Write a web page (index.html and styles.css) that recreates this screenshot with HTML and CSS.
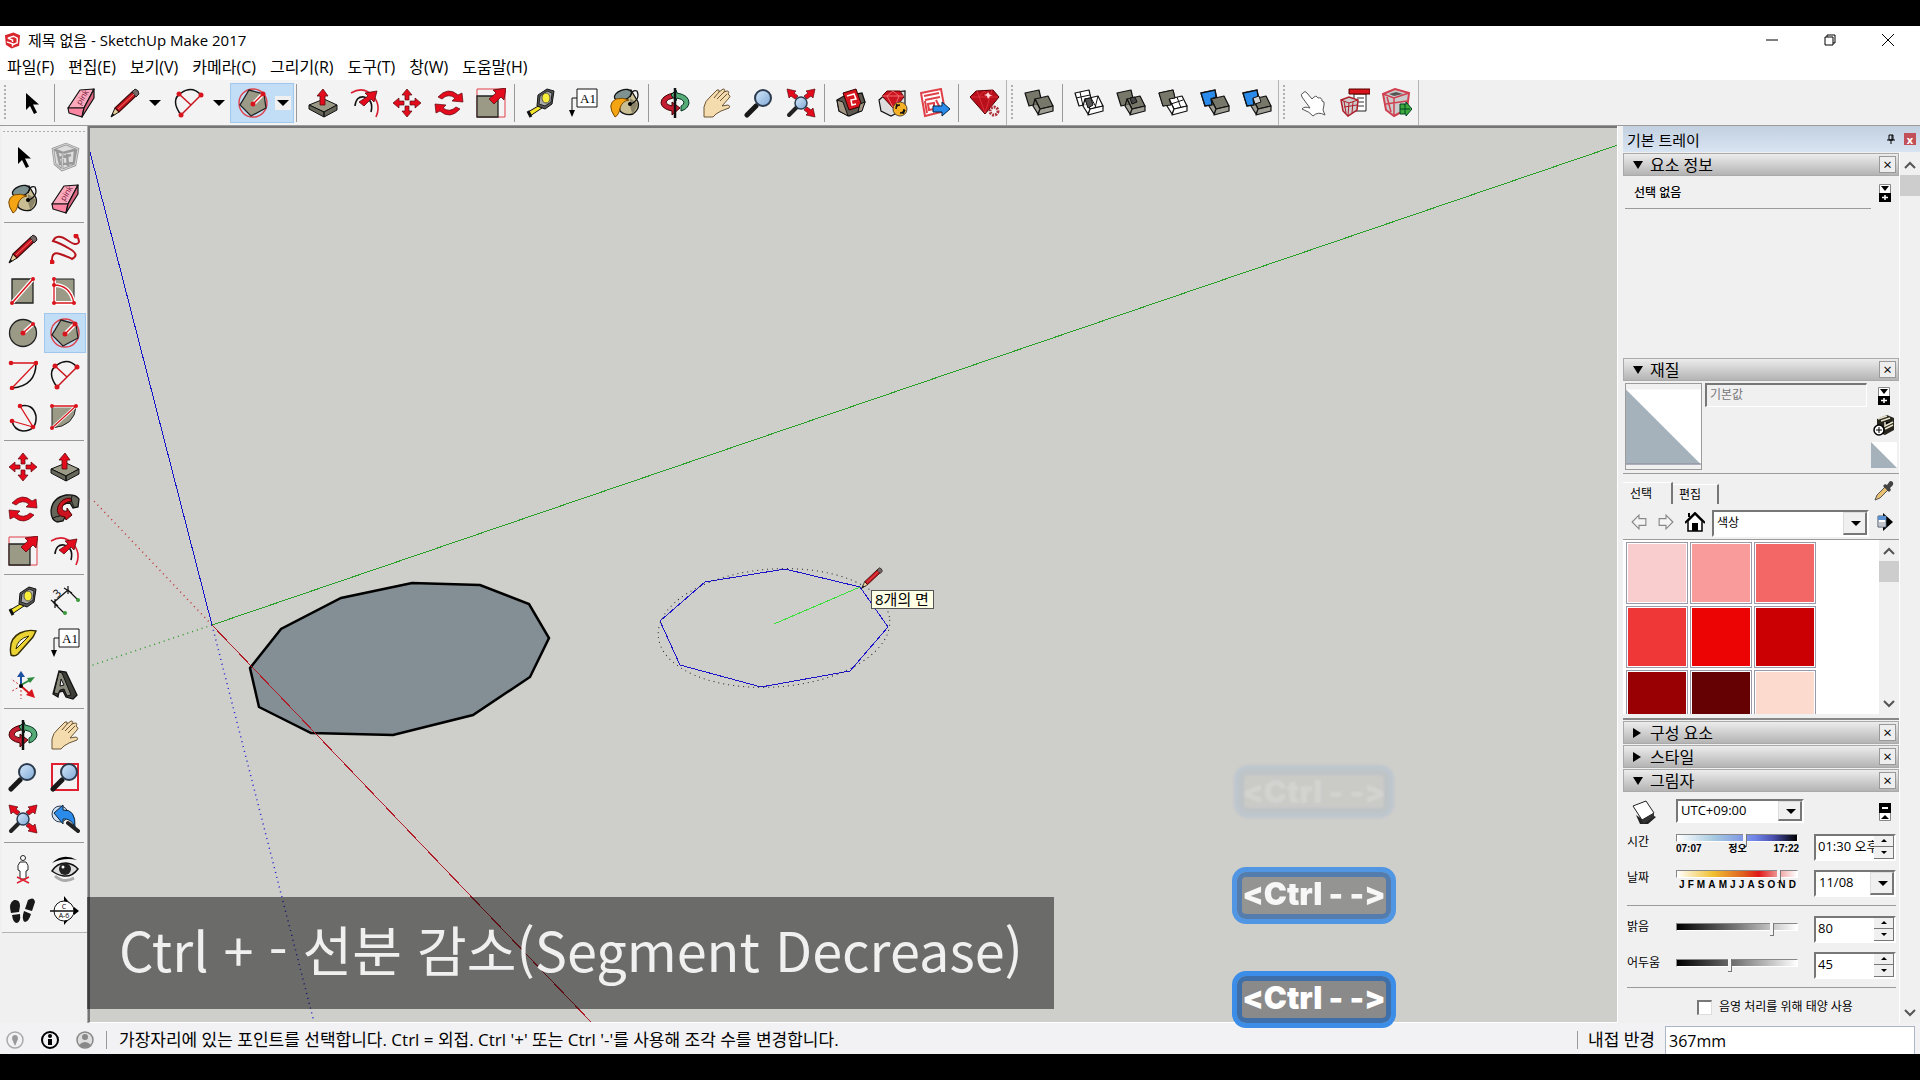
FILE: index.html
```html
<!DOCTYPE html>
<html lang="ko">
<head>
  <meta charset="UTF-8" />
  <meta name="viewport" content="width=device-width, initial-scale=1.0"/>
  <title>제목 없음 - SketchUp Make 2017</title>
  <link rel="stylesheet" href="styles.css">
</head>
<body>
  <!-- icon set, shared by both toolbars -->
  <svg class="icon-defs" aria-hidden="true">
    <linearGradient id="lens" x1="0" y1="0" x2="1" y2="1"><stop offset="0" stop-color="#d4e8fa"/><stop offset="1" stop-color="#7fa8d6"/></linearGradient>
    <symbol id="i-select" viewBox="0 0 30 30"><path d="M10 5v17l4-4 4 8 3-1.500-4-8h6z" fill="#000"/></symbol>
    <symbol id="i-component" viewBox="0 0 30 30"><path d="M3 7l13-5 12 5-3 16-13 5-7-6z" fill="#ddd"/><g fill="none" stroke="#999" stroke-width="2.500"><path d="M3 7l13-5 12 5-3 16-13 5-7-6zM3 7l10 4 15-4M13 11l-1 17M7 9l3 13 14-1 1-12M9 16l12-3M17 12l1 12"/></g><path d="M3 7l13-5 12 5-3 16-13 5-7-6zM13 11l-1 17" fill="none" stroke="#eee" stroke-width=".7"/></symbol>
    <symbol id="i-eraser" viewBox="0 0 30 30"><g stroke="#111" stroke-width="1.200" stroke-linejoin="round"><path d="M2 20L14 2l14-1-10 19z" fill="#fba9bd"/><path d="M2 20l16 0-2 9-13-4z" fill="#fb86a2"/><path d="M18 20L28 1v9L16 29z" fill="#d9647f"/></g></symbol>
    <symbol id="i-pencil" viewBox="0 0 30 30"><path d="M1 29l4-9 4 4z" fill="#e8cf9a" stroke="#111"/><path d="M1 29l1.500-4 2 2z" fill="#111"/><path d="M5 20L23 3l4 4L9 24z" fill="#c8141c" stroke="#3a0a0a" stroke-width="1.200"/><path d="M22 4l3-3q4 1 4 5l-3 3z" fill="#766" stroke="#222"/><path d="M8 21L24 6" stroke="#f27070"/></symbol>
    <symbol id="i-arc" viewBox="0 0 30 30"><path d="M7 27Q-4 12 7 5Q18-3 27 7" fill="none" stroke="#111" stroke-width="1.500"/><path d="M7 27L27 7M5 6l12 11" stroke="#c8141c" stroke-width="1.500"/><g fill="#d8141c"><circle cx="7" cy="27" r="2.500"/><circle cx="27" cy="7" r="2.500"/><circle cx="5" cy="6" r="2.500"/></g></symbol>
    <symbol id="i-polygon" viewBox="0 0 30 30"><circle cx="15" cy="15" r="14" fill="none" stroke="#e04048" stroke-width="1.400"/><path d="M11 2l15 4 2 14-15 8L2 17z" fill="#9a9a86" stroke="#222" stroke-width="1.300"/><path d="M15 16L25 6" stroke="#fff" stroke-width="4"/><path d="M15 16L25 6" stroke="#d8141c" stroke-width="1.500"/><circle cx="15" cy="16" r="2.500" fill="#d8141c"/><circle cx="25" cy="6" r="2.500" fill="#d8141c"/></symbol>
    <symbol id="i-pushpull" viewBox="0 0 30 30"><path d="M1 17l15-6 13 6-13 7z" fill="#9a9a86" stroke="#111"/><path d="M1 17l15 7v5L1 21zM16 24l13-7v5l-13 7z" fill="#66665a" stroke="#111"/><path d="M15 1l5 7h-3v9h-5V8H9z" fill="#e30b1c" stroke="#5a0a10" stroke-width=".8"/></symbol>
    <symbol id="i-offset" viewBox="0 0 30 30"><path d="M1 5Q14-3 24 9q7 9 2 20" fill="none" stroke="#d82030" stroke-width="1.600"/><path d="M5 18Q6 8 14 9q10 3 7 15" fill="none" stroke="#111" stroke-width="1.600"/><path d="M27 3l-3 11-3-3-7 7-5-4 9-6-3-3z" fill="#e30b1c" stroke="#5a0a10" stroke-width=".8"/></symbol>
    <symbol id="i-move" viewBox="0 0 30 30"><g fill="#e30b1c" stroke="#5a0a10" stroke-width=".7"><path id="marr" d="M15 1l5 6h-3v5h-4V7h-3z"/><use href="#marr" transform="rotate(90 15 15)"/><use href="#marr" transform="rotate(180 15 15)"/><use href="#marr" transform="rotate(270 15 15)"/></g></symbol>
    <symbol id="i-rotate" viewBox="0 0 30 30"><g fill="#e30b1c" stroke="#5a0a10" stroke-width=".7"><path id="rarr" d="M4 9Q14-2 24 7l4-2 1 9-11-1 3-3Q14 5 8 11z"/><use href="#rarr" transform="rotate(180 15 15)"/></g></symbol>
    <symbol id="i-scale" viewBox="0 0 30 30"><path d="M1 1h28v28H1z" fill="none" stroke="#e04048"/><path d="M1 8h21v21H1z" fill="#9a9a86" stroke="#222" stroke-width="1.300"/><path d="M30 0l-2 12-3-3-7 7-5-5 7-6-3-3z" fill="#e30b1c" stroke="#5a0a10" stroke-width=".8"/></symbol>
    <symbol id="i-tape" viewBox="0 0 30 30"><path d="M2 24l12-7 2 3L4 28z" fill="#f4e52a" stroke="#111"/><path d="M2 23l3 6" stroke="#111" stroke-width="3"/><path d="M12 7l9-6 7 2-2 13-7 5-8-3z" fill="#555" stroke="#111"/><path d="M14 8l7-5 5 2-1 9-6 4-6-2z" fill="#aaa" stroke="#222"/><ellipse cx="20" cy="10" rx="4" ry="5" fill="#f8ee3a" stroke="#554"/></symbol>
    <symbol id="i-text" viewBox="0 0 30 30"><path d="M9 1h20v18H9z" fill="#fff" stroke="#111"/><path d="M9 10H4v14" fill="none" stroke="#111"/><path d="M1 22h6l-3 7z"/></symbol>
    <symbol id="i-paint" viewBox="0 0 30 30"><path d="M8 8l13-6 7 12q2 7-5 12-8 2-13-3z" fill="#c9bd93" stroke="#111" stroke-width="1.300"/><path d="M20 10l8 6-5 10q-4-6-3-16z" fill="#8c8468"/><ellipse cx="13" cy="7" rx="9" ry="5" transform="rotate(-20 13 7)" fill="#7e9292" stroke="#111" stroke-width="1.300"/><path d="M5 29Q-4 16 6 11q6-2 13 1-7 1-9 8-1 7-5 9z" fill="#f5a414" stroke="#7a4a00"/><path d="M19 17Q31 12 27 3q-5-2-7 6" fill="none" stroke="#111" stroke-width="1.300"/><circle cx="20" cy="16" r="2"/></symbol>
    <symbol id="i-orbit" viewBox="0 0 30 30"><path d="M13 5Q1 8 1 15q1 6 11 8v4l8-7-8-6v4q-6-1-6-4 1-3 7-4z" fill="#c41c30" stroke="#400"/><path d="M17 5q12 2 12 10-1 6-8 8v-5q3-1 3-4-1-3-7-4l-1 3-5-6 5-5z" fill="#56ab76" stroke="#032"/><path d="M15 0v30" stroke="#111" stroke-width="2.500"/></symbol>
    <symbol id="i-hand" viewBox="0 0 30 30"><path d="M2 29V19q1-6 6-10l7-7q3-1 2 2l4-3q3 0 1 3l3-1q3 0 1 3l1 1q2 1 0 3l-7 8 6-1q3 1 1 3l-8 3q-6 3-8 6z" fill="#f5dcae" stroke="#6b5535"/><path d="M12 10l5-6M15 11l7-7M18 13l7-7" stroke="#6b5535" fill="none"/></symbol>
    <symbol id="i-zoom" viewBox="0 0 30 30"><path d="M3 27l9-9" stroke="#181818" stroke-width="5" stroke-linecap="round"/><circle cx="19" cy="10" r="8" fill="url(#lens)" stroke="#2b3a4d" stroke-width="2"/></symbol>
    <symbol id="i-extents" viewBox="0 0 30 30"><path d="M3 27l8-8" stroke="#222" stroke-width="4" stroke-linecap="round"/><circle cx="15" cy="15" r="6" fill="url(#lens)" stroke="#2b3a4d" stroke-width="1.500"/><g fill="#e30b1c" stroke="#5a0a10" stroke-width=".7"><path id="xarr" d="M29 1l-2 9-2-2-4 3-3-3 4-3-2-2z"/><use href="#xarr" transform="matrix(-1 0 0 1 30 0)"/><use href="#xarr" transform="matrix(1 0 0 -1 0 30)"/></g></symbol>
    <symbol id="i-zoomwin" viewBox="0 0 30 30"><path d="M2 2h26v26H2z" fill="none" stroke="#e02030" stroke-width="2"/><use href="#i-zoom" width="30" height="30"/></symbol>
    <symbol id="i-previous" viewBox="0 0 30 30"><circle cx="10" cy="10" r="8" fill="#cfe0f2" stroke="#2b3a4d"/><path d="M18 19l10 8" stroke="#222" stroke-width="4" stroke-linecap="round"/><path d="M4 9l9-8v5q13-1 12 17-4-9-12-8v5z" fill="#2a8bea" stroke="#123"/></symbol>
    <symbol id="i-warehouse" viewBox="0 0 30 30"><path d="M1 12l7-4 18-3 3 9-4 9-12 5-10-5z" fill="#5c5850" stroke="#111" stroke-width="1.300"/><path d="M7 5l13-4 6 17-13 4z" fill="#d8141c" stroke="#300"/><path d="M11 8l7-2 2 5-5 1 1 5 4-1" fill="none" stroke="#fff" stroke-width="1.500"/><path d="M1 12l6 2 5 14-9-5zM29 14l-5 2-2 8 4-1z" fill="#a39684" stroke="#111"/></symbol>
    <symbol id="i-extwh" viewBox="0 0 30 30"><path d="M1 12l8-7 18-2v18l-14 7-10-5z" fill="#ddd" stroke="#111" stroke-width="1.200"/><path d="M4 8l5-5h13l4 6-10 12z" fill="#cc1420" stroke="#500"/><path d="M4 8h22M9 8l7 13 5-13-6-5z" fill="none" stroke="#f58080" stroke-width=".8"/><circle cx="22" cy="21" r="7" fill="#f6b023" stroke="#543"/><path d="M18 21q0-4 4-4M26 21q0 4-4 4M19 16l-1 4M25 26l2-4" fill="none" stroke="#111" stroke-width="1.500"/></symbol>
    <symbol id="i-layout" viewBox="0 0 30 30"><path d="M1 5l20-4 4 22L5 28z" fill="#fff" stroke="#e04048" stroke-width="2"/><path d="M4 8l15-3M5 12l15-3M8 16l6-1v6l-5 1zM16 12l4 8M5 13l2 12" fill="none" stroke="#e04048" stroke-width="2"/><path d="M13 18h9v-4l8 7-8 7v-4h-9z" fill="#2a8bea" stroke="#024"/></symbol>
    <symbol id="i-gem" viewBox="0 0 30 30"><path d="M0 9l6-6 17-1 6 7-14 17z" fill="#b80f1a" stroke="#500"/><path d="M1 9h27M7 3l8 22 7-23M9 9l5-6 6 6" fill="none" stroke="#d8303c"/><path d="M18 4l2 3 3 0-3 1-2 3-1-3-3-1 3-1z" fill="#fdd"/><circle cx="24" cy="23" r="4" fill="#f4f3f4" stroke="#b0303a" stroke-width="3" stroke-dasharray="2 1"/></symbol>
    <symbol id="boxes" viewBox="0 0 30 30"><g stroke="#111" stroke-linejoin="round" stroke-width="1.200"><path d="M1 5l14-3 3 13-13 3z"/><path d="M11 11l13-3 5 10-13 3z"/><path d="M11 11l5 10-2 5-5-8zM16 21l13-3v5l-15 4z" fill-opacity=".7"/></g></symbol>
    <symbol id="i-outer" viewBox="0 0 30 30"><use href="#boxes" fill="#77776a"/></symbol>
    <symbol id="i-intersect" viewBox="0 0 30 30"><use href="#boxes" fill="#fff"/><path d="M11 11l6-1 2 7-5 3z" fill="#555" stroke="#111"/><path d="M6 4l3 14M2 10l14-3M17 10l5 9M24 8l-3 12" stroke="#111" fill="none"/></symbol>
    <symbol id="i-union" viewBox="0 0 30 30"><use href="#boxes" fill="#77776a"/><path d="M14 10l5-1 2 5-5 2z" fill="#444" stroke="#111"/></symbol>
    <symbol id="i-subtract" viewBox="0 0 30 30"><use href="#boxes" fill="#fff"/><path d="M1 5l14-3 2 8-6 1 2 6-8 1z" fill="#77776a" stroke="#111"/><path d="M13 16l12-4M19 9l4 11" stroke="#111"/></symbol>
    <symbol id="i-trim" viewBox="0 0 30 30"><use href="#boxes" fill="#77776a"/><path d="M1 5l14-3 1 7-5 2 1 6-7 1z" fill="#2a8bea" stroke="#111" stroke-width="1.300"/></symbol>
    <symbol id="i-split" viewBox="0 0 30 30"><use href="#i-trim" width="30" height="30"/><path d="M11 10l6-2 2 6-6 2z" fill="#d4d4d4" stroke="#111"/></symbol>
    <symbol id="i-finger" viewBox="0 0 30 30"><path d="M5 5q2-3 4 0l5 6q4-5 6-1 4-1 4 3 3 0 2 4l-1 5 2 5q-7-4-12 1-3-4-11-7 2-3 8-1L4 9q-2-3 1-4z" fill="#fff" stroke="#555"/></symbol>
    <symbol id="i-comp-opt" viewBox="0 0 30 30"><path d="M14 6h12v17H14z" fill="#fff" stroke="#222"/><path d="M9 1h21v5H9z" fill="#d8141c" stroke="#500"/><path d="M17 10h7M17 14h7M17 18h7" stroke="#333"/><path d="M1 12l8-3 9 3-1 10-9 6-5-5z" fill="#ccc" stroke="#b01c28" stroke-width="1.500"/><path d="M1 12l8 3 9-3M9 15l-1 13M4 13l2 12M13 14l-1 11M4 19l13-2" stroke="#b01c28" fill="none"/></symbol>
    <symbol id="i-comp-attr" viewBox="0 0 30 30"><path d="M1 6l12-5 14 4-2 16-13 7-8-6z" fill="#ccc" stroke="#d04050" stroke-width="2"/><path d="M7 6l7-2 7 2-9 2z" fill="#555"/><path d="M1 6l11 4 15-5M12 10v18M5 9l4 15M4 16l21-3" stroke="#d04050" stroke-width="1.500" fill="none"/><path d="M18 16h6v-2l6 7-6 7v-2h-6zM18 21h10M23 16v10" fill="#3cab3c" stroke="#042"/></symbol>
    <symbol id="i-freehand" viewBox="0 0 30 30"><path d="M2 28Q1 17 10 20t12 5q8-4-2-10T3 7Q7-1 17 6t12 2q0-4-3-6" fill="none" stroke="#b8141c" stroke-width="2"/><circle cx="2" cy="28" r="2.500" fill="#d8141c"/><circle cx="26" cy="2" r="2.500" fill="#d8141c"/></symbol>
    <symbol id="i-rect" viewBox="0 0 30 30"><path d="M4 3h21v24H4z" fill="#9a9a86" stroke="#222" stroke-width="1.300"/><path d="M4 27L25 3" stroke="#fff" stroke-width="4"/><path d="M4 27L25 3" stroke="#d8141c" stroke-width="1.500"/><circle cx="4" cy="27" r="2" fill="#d8141c"/><circle cx="25" cy="3" r="2" fill="#d8141c"/></symbol>
    <symbol id="i-rotrect" viewBox="0 0 30 30"><path d="M4 3h20v24H4z" fill="#9a9a86" stroke="#222"/><path d="M4 3v24h20M4 9q16 0 20 18" fill="none" stroke="#fff" stroke-width="4"/><path d="M4 3v24h20M4 9q16 0 20 18" fill="none" stroke="#d8141c" stroke-width="1.300"/><g fill="#d8141c"><circle cx="4" cy="3" r="2"/><circle cx="4" cy="9" r="2"/><circle cx="4" cy="27" r="2"/><circle cx="24" cy="27" r="2"/></g></symbol>
    <symbol id="i-circle" viewBox="0 0 30 30"><circle cx="15" cy="15" r="13.500" fill="#9a9a86" stroke="#222" stroke-width="1.300"/><path d="M15 15L25 6" stroke="#fff" stroke-width="4"/><path d="M15 15L25 6" stroke="#d8141c" stroke-width="1.500"/><circle cx="15" cy="15" r="2.500" fill="#d8141c"/><circle cx="25" cy="6" r="2" fill="#d8141c"/></symbol>
    <symbol id="i-arc2" viewBox="0 0 30 30"><path d="M28 3Q28 26 4 28" fill="none" stroke="#111" stroke-width="1.500"/><path d="M3 3h25L4 28" fill="none" stroke="#d8141c" stroke-width="1.300"/><g fill="#d8141c"><circle cx="3" cy="3" r="2.300"/><circle cx="28" cy="3" r="2.300"/><circle cx="4" cy="28" r="2.300"/></g></symbol>
    <symbol id="i-arc3" viewBox="0 0 30 30"><path d="M12 4Q25 1 28 14 29 29 15 29 6 28 4 19" fill="none" stroke="#111" stroke-width="1.500"/><path d="M12 4l13 21-21-6" fill="none" stroke="#d8141c" stroke-width="1.300"/><g fill="#d8141c"><circle cx="12" cy="4" r="2.300"/><circle cx="25" cy="25" r="2.300"/><circle cx="4" cy="19" r="2.300"/></g></symbol>
    <symbol id="i-pie" viewBox="0 0 30 30"><path d="M2 4h24Q25 24 2 26z" fill="#9a9a86" stroke="#222"/><path d="M2 4h24L2 26" fill="none" stroke="#fff" stroke-width="3"/><path d="M2 4h24L2 26" fill="none" stroke="#d8141c" stroke-width="1.300"/><g fill="#d8141c"><circle cx="2" cy="4" r="2"/><circle cx="26" cy="4" r="2"/><circle cx="2" cy="26" r="2"/></g></symbol>
    <symbol id="i-follow" viewBox="0 0 30 30"><path d="M1 17Q2 4 16 1q10-1 13 4l-1 8-5 1-3-5q-8 0-10 6 0 5 6 6l-3 6-6 1Q1 26 1 17z" fill="#66665a" stroke="#111" stroke-width="1.300"/><path d="M8 12q4-8 12-8l2 3q-9 1-10 7 1 4 5 3v-3l5 7-6 5-1-3Q5 22 8 12z" fill="#cc1420" stroke="#500"/><path d="M22 2q-2 4 2 11M3 24q4-2 7-2" fill="none" stroke="#111"/></symbol>
    <symbol id="i-dim" viewBox="0 0 30 30"><path d="M3 17L18 4M18 4l11 11M4 17l11 11M1 14l7 6M14 2l8 5M18 0v8M5 13v9" stroke="#111" stroke-width="1.200"/><circle cx="28" cy="14" r="2" fill="#3a9c3a"/><circle cx="15" cy="27" r="2" fill="#3a9c3a"/></symbol>
    <symbol id="i-protractor" viewBox="0 0 30 30"><path d="M3 27Q0 11 12 5 20 1 28 3L25 9 10 26q-3 3-7 1z" fill="#ecd334" stroke="#332c00" stroke-width="1.400"/><path d="M8 21Q9 11 21 8z" fill="#f4f3f4" stroke="#332c00"/></symbol>
    <symbol id="i-axes" viewBox="0 0 30 30"><path d="M13 16V4" stroke="#1d50a0" stroke-width="2"/><path d="M9 7l4-6 4 6z" fill="#1d50a0"/><path d="M13 15l9-5" stroke="#2d8a3d" stroke-width="2"/><path d="M19 8l8-1-5 6z" fill="#2d8a3d"/><path d="M13 16l9 8" stroke="#d8141c" stroke-width="2"/><path d="M24 19l3 9-9-3z" fill="#d8141c"/><path d="M13 16L3 9M13 16v13M13 16l-9 5" stroke="#c33" stroke-dasharray="2 2"/><circle cx="13" cy="16" r="2"/></symbol>
    <symbol id="i-3dtext" viewBox="0 0 30 30"><path d="M3 24L9 1l7 1 11 23-4 4-7-2-3-6-4 1-1 5z" fill="#3e3e38" stroke="#111" stroke-width="1.300"/><path d="M4 23L9 2l3 1 9 22-4 1-3-7-4 1-2 4z" fill="#8a8a7c" stroke="#111"/><path d="M10 16l1-7 3 6z" fill="#eee" stroke="#111"/></symbol>
    <symbol id="i-position" viewBox="0 0 30 30"><path d="M12 8q-3 3-2 8l2 1v8h6v-8l2-1q1-5-2-8z" fill="#fff" stroke="#222"/><circle cx="15" cy="4" r="2.500" fill="#fff" stroke="#222"/><path d="M9 23l12 6M21 23L9 29" stroke="#e02030" stroke-width="1.500"/></symbol>
    <symbol id="i-look" viewBox="0 0 30 30"><path d="M2 9Q13-2 27 6 14 3 2 9z"/><path d="M2 17q5-8 14-8 8 1 12 6-6 8-14 7Q7 21 2 17z" fill="#ddd" stroke="#111" stroke-width="1.500"/><circle cx="15" cy="15" r="6" fill="#222"/><circle cx="13" cy="13" r="1.500" fill="#fff"/><path d="M5 22q9 8 19 2" fill="none" stroke="#aaa" stroke-width="3"/></symbol>
    <symbol id="i-walk" viewBox="0 0 30 30"><path d="M6 4q6-1 6 6l-1 6-8 1Q0 7 6 4zM4 19l8-1q1 8-3 9-4 0-5-8zM20 4q6-4 7 2l-3 9-7-2zM16 15l7 3q-2 7-6 8-4-2-1-11z" fill="#181818"/></symbol>
    <symbol id="i-section" viewBox="0 0 30 30"><path d="M14 0l12 15-12 14z"/><circle cx="14" cy="15" r="10" fill="#fff" stroke="#111"/><path d="M0 15h28" stroke="#111" stroke-width="1.500"/><path d="M24 11l5 4-5 4z"/></symbol>
  </svg>

  <div class="app">
    <header class="titlebar">
      <svg class="logo" viewBox="0 0 18 18"><path d="M1 4l9-3 7 3-1 11-8 3-6-4z" fill="#d9242c"/><path d="M4 7l6-2 4 2v5l-5 2M4 7l5 2v2M3 11l6 2v3" fill="none" stroke="#fff" stroke-width="1.500"/></svg>
      <h1>제목 없음 - SketchUp Make 2017</h1>
      <div class="window-buttons">
        <button aria-label="최소화"><svg viewBox="0 0 12 12"><path d="M0 6h12"/></svg></button>
        <button aria-label="최대화"><svg viewBox="0 0 12 12"><path d="M1 3h8v8H1zM3 3V1h8v8H9"/></svg></button>
        <button aria-label="닫기"><svg viewBox="0 0 12 12"><path d="M0 0l12 12M12 0L0 12"/></svg></button>
      </div>
    </header>

    <nav class="menu">
      <a href="#">파일(F)</a>
      <a href="#">편집(E)</a>
      <a href="#">보기(V)</a>
      <a href="#">카메라(C)</a>
      <a href="#">그리기(R)</a>
      <a href="#">도구(T)</a>
      <a href="#">창(W)</a>
      <a href="#">도움말(H)</a>
    </nav>

    <div class="toolbars">
      <div class="toolbar">
        <span class="grip"></span>
        <button class="tool" aria-label="선택"><svg><use href="#i-select"/></svg></button>
        <span class="sep"></span>
        <button class="tool" aria-label="지우개"><svg><use href="#i-eraser"/><text class="pink" x="11" y="15" transform="rotate(-58 15 13)">pink</text></svg></button>
        <div class="split"><button class="tool" aria-label="선"><svg><use href="#i-pencil"/></svg></button><button class="drop" aria-label="선 도구"></button></div>
        <div class="split"><button class="tool" aria-label="호"><svg><use href="#i-arc"/></svg></button><button class="drop" aria-label="호 도구"></button></div>
        <div class="split active"><button class="tool" aria-label="다각형"><svg><use href="#i-polygon"/></svg></button><button class="drop" aria-label="도형 도구"></button></div>
        <span class="sep"></span>
        <button class="tool" aria-label="밀기/끌기"><svg><use href="#i-pushpull"/></svg></button>
        <button class="tool" aria-label="오프셋"><svg><use href="#i-offset"/></svg></button>
        <button class="tool" aria-label="이동"><svg><use href="#i-move"/></svg></button>
        <button class="tool" aria-label="회전"><svg><use href="#i-rotate"/></svg></button>
        <button class="tool" aria-label="배율"><svg><use href="#i-scale"/></svg></button>
        <span class="sep"></span>
        <button class="tool" aria-label="줄자"><svg><use href="#i-tape"/></svg></button>
        <button class="tool" aria-label="텍스트"><svg><use href="#i-text"/><text class="a1" x="12" y="15">A1</text></svg></button>
        <button class="tool" aria-label="페인트통"><svg><use href="#i-paint"/></svg></button>
        <span class="sep"></span>
        <button class="tool" aria-label="궤도"><svg><use href="#i-orbit"/></svg></button>
        <button class="tool" aria-label="이동 보기"><svg><use href="#i-hand"/></svg></button>
        <button class="tool" aria-label="확대/축소"><svg><use href="#i-zoom"/></svg></button>
        <button class="tool" aria-label="범위 확대"><svg><use href="#i-extents"/></svg></button>
        <span class="sep"></span>
        <button class="tool" aria-label="3D Warehouse"><svg><use href="#i-warehouse"/></svg></button>
        <button class="tool" aria-label="Extension Warehouse"><svg><use href="#i-extwh"/></svg></button>
        <button class="tool" aria-label="LayOut"><svg><use href="#i-layout"/></svg></button>
        <span class="sep"></span>
        <button class="tool" aria-label="확장 관리자"><svg><use href="#i-gem"/></svg></button>
      </div>
      <div class="toolbar solids">
        <span class="grip"></span>
        <button class="tool" aria-label="외부 쉘"><svg><use href="#i-outer"/></svg></button>
        <span class="sep"></span>
        <button class="tool" aria-label="교차"><svg><use href="#i-intersect"/></svg></button>
        <button class="tool" aria-label="결합"><svg><use href="#i-union"/></svg></button>
        <button class="tool" aria-label="빼기"><svg><use href="#i-subtract"/></svg></button>
        <button class="tool" aria-label="자르기"><svg><use href="#i-trim"/></svg></button>
        <button class="tool" aria-label="분할"><svg><use href="#i-split"/></svg></button>
      </div>
      <div class="toolbar dynamic">
        <span class="grip"></span>
        <button class="tool" aria-label="상호작용"><svg><use href="#i-finger"/></svg></button>
        <button class="tool" aria-label="구성 요소 옵션"><svg><use href="#i-comp-opt"/></svg></button>
        <button class="tool" aria-label="구성 요소 속성"><svg><use href="#i-comp-attr"/></svg></button>
      </div>
    </div>

    <main class="workspace">
      <aside class="palette">
        <div class="tools">
          <button class="tool" aria-label="선택"><svg><use href="#i-select"/></svg></button>
          <button class="tool" aria-label="구성 요소 만들기"><svg><use href="#i-component"/></svg></button>
          <button class="tool" aria-label="페인트통"><svg><use href="#i-paint"/></svg></button>
          <button class="tool" aria-label="지우개"><svg><use href="#i-eraser"/><text class="pink" x="11" y="15" transform="rotate(-58 15 13)">pink</text></svg></button>
          <hr>
          <button class="tool" aria-label="선"><svg><use href="#i-pencil"/></svg></button>
          <button class="tool" aria-label="자유 곡선"><svg><use href="#i-freehand"/></svg></button>
          <button class="tool" aria-label="직사각형"><svg><use href="#i-rect"/></svg></button>
          <button class="tool" aria-label="회전된 직사각형"><svg><use href="#i-rotrect"/></svg></button>
          <button class="tool" aria-label="원"><svg><use href="#i-circle"/></svg></button>
          <button class="tool active" aria-label="다각형"><svg><use href="#i-polygon"/></svg></button>
          <button class="tool" aria-label="호"><svg><use href="#i-arc2"/></svg></button>
          <button class="tool" aria-label="2점 호"><svg><use href="#i-arc"/></svg></button>
          <button class="tool" aria-label="3점 호"><svg><use href="#i-arc3"/></svg></button>
          <button class="tool" aria-label="파이"><svg><use href="#i-pie"/></svg></button>
          <hr>
          <button class="tool" aria-label="이동"><svg><use href="#i-move"/></svg></button>
          <button class="tool" aria-label="밀기/끌기"><svg><use href="#i-pushpull"/></svg></button>
          <button class="tool" aria-label="회전"><svg><use href="#i-rotate"/></svg></button>
          <button class="tool" aria-label="따라가기"><svg><use href="#i-follow"/></svg></button>
          <button class="tool" aria-label="배율"><svg><use href="#i-scale"/></svg></button>
          <button class="tool" aria-label="오프셋"><svg><use href="#i-offset"/></svg></button>
          <hr>
          <button class="tool" aria-label="줄자"><svg><use href="#i-tape"/></svg></button>
          <button class="tool" aria-label="치수"><svg><use href="#i-dim"/><text class="three" x="4" y="12" transform="rotate(-42 6 8)">3</text></svg></button>
          <button class="tool" aria-label="각도기"><svg><use href="#i-protractor"/></svg></button>
          <button class="tool" aria-label="텍스트"><svg><use href="#i-text"/><text class="a1" x="12" y="15">A1</text></svg></button>
          <button class="tool" aria-label="축"><svg><use href="#i-axes"/></svg></button>
          <button class="tool" aria-label="3D 텍스트"><svg><use href="#i-3dtext"/></svg></button>
          <hr>
          <button class="tool" aria-label="궤도"><svg><use href="#i-orbit"/></svg></button>
          <button class="tool" aria-label="이동 보기"><svg><use href="#i-hand"/></svg></button>
          <button class="tool" aria-label="확대/축소"><svg><use href="#i-zoom"/></svg></button>
          <button class="tool" aria-label="창 확대"><svg><use href="#i-zoomwin"/></svg></button>
          <button class="tool" aria-label="범위 확대"><svg><use href="#i-extents"/></svg></button>
          <button class="tool" aria-label="이전"><svg><use href="#i-previous"/></svg></button>
          <hr>
          <button class="tool" aria-label="카메라 배치"><svg><use href="#i-position"/></svg></button>
          <button class="tool" aria-label="둘러보기"><svg><use href="#i-look"/></svg></button>
          <button class="tool" aria-label="이동 걷기"><svg><use href="#i-walk"/></svg></button>
          <button class="tool" aria-label="단면"><svg><use href="#i-section"/><text class="mark" x="14" y="13">C</text><text class="mark" x="14" y="22">A-6</text></svg></button>
        </div>
      </aside>

      <section class="canvas">
        <svg class="scene" viewBox="90 128 1527 894" preserveAspectRatio="xMinYMin slice">
          <!-- dotted negative axes -->
          <g fill="none" stroke-width="1.500" stroke-dasharray="1 4">
            <path d="M212 625L93 500" stroke="#c03030"/>
            <path d="M212 625L90 666" stroke="#2a9a2a"/>
            <path d="M212 625L314 1022" stroke="#2020d0"/>
          </g>
          <path d="M412 583L480 585 529 604 549 638 530 677 473 715 393 735 311 733 259 707 250 668 281 629 341 598z" fill="#848f95" stroke="#000" stroke-width="2.500"/>
          <g fill="none" shape-rendering="crispEdges">
            <path d="M212 625L90 152" stroke="#1414c8"/>
            <path d="M212 625L1618 145" stroke="#28a028"/>
            <path d="M212 625L591 1022" stroke="#b01c28"/>
            <path d="M785 569L860 587 888 627 850 671 761 687 680 665 660 621 705 582z" stroke="#1c14c8"/>
            <path d="M774 624L860 587" stroke="#38e038"/>
          </g>
          <ellipse cx="774" cy="628" rx="116" ry="59" transform="rotate(-4 774 628)" fill="none" stroke="#222" stroke-dasharray="1 4"/>
          <use href="#i-pencil" x="861" y="567" width="22" height="22"/>
        </svg>
        <div class="tooltip">8개의 면</div>
        <div class="keys">
          <kbd class="faded">&lt;Ctrl - -&gt;</kbd>
          <kbd class="older">&lt;Ctrl - -&gt;</kbd>
          <kbd>&lt;Ctrl - -&gt;</kbd>
        </div>
        <p class="caption">Ctrl + - 선분 감소(Segment Decrease)</p>
      </section>

      <aside class="tray">
        <div class="tray-title">
          <h2>기본 트레이</h2>
          <button class="pin" aria-label="고정"><svg viewBox="0 0 8 10"><path d="M2 1h4v5H2zM0 6h8M4 6v4M5 1v5" fill="none" stroke="#000"/></svg></button>
          <button class="tray-close" aria-label="닫기">x</button>
        </div>
        <div class="tray-body">
          <div class="panels">
            <h3 class="head open">요소 정보<button aria-label="닫기">×</button></h3>
            <div class="entity">
              <strong>선택 없음</strong>
              <button class="detail" aria-label="세부 정보"><svg viewBox="0 0 12 18"><path d="M.5.5h11v17H.5z" fill="#fff" stroke="#888"/><path d="M0 9h12v9H0z"/><path d="M2 2h8L6 7z"/><path d="M6 11v5M3 13.500h6" stroke="#fff" stroke-width="1.500"/></svg></button>
            </div>

            <h3 class="head open">재질<button aria-label="닫기">×</button></h3>
            <div class="material">
              <div class="current">
                <svg class="preview" viewBox="0 0 75 84"><path d="M0 5h75v75H0z" fill="#fff"/><path d="M0 5l75 75H0z" fill="#a5b1bb"/><path d="M0 79.500h75" stroke="#889"/></svg>
                <input type="text" value="기본값" aria-label="재질 이름" disabled>
                <div class="side">
                  <button class="detail" aria-label="보조 창"><svg viewBox="0 0 12 18"><path d="M.5.5h11v17H.5z" fill="#fff" stroke="#888"/><path d="M0 9h12v9H0z"/><path d="M2 2h8L6 7z"/><path d="M6 11v5M3 13.500h6" stroke="#fff" stroke-width="1.500"/></svg></button>
                  <button aria-label="재질 만들기"><svg width="22" height="22" viewBox="0 0 22 22"><path d="M4 5l10-4 7 3v12l-9 5-8-3z" fill="#28261c"/><path d="M5 5l9-3M8 7l9-3M12 8v4l8-4M12 15l8-4" stroke="#e8e4cc" stroke-width="1.500"/><circle cx="6" cy="16" r="5" fill="#fff" stroke="#000" stroke-width="1.500"/><path d="M6 13v6M3 16h6" stroke="#000"/></svg></button>
                  <button aria-label="기본 재질"><svg width="26" height="26" viewBox="0 0 26 26"><path d="M0 0h26v26H0z" fill="#fff"/><path d="M0 0l26 26H0z" fill="#a5b1bb"/></svg></button>
                </div>
              </div>
              <div class="tabs">
                <button class="on">선택</button>
                <button>편집</button>
                <button class="dropper" aria-label="샘플"><svg width="22" height="22" viewBox="0 0 22 22"><path d="M2 20l2-5 8-8 3 3-8 8z" fill="#e8c070" stroke="#555"/><path d="M10 6l2-2 2 1 3-4q4 0 3 4l-3 3 1 2-2 2z" fill="#444"/></svg></button>
              </div>
              <div class="browse">
                <button aria-label="뒤로"><svg width="16" height="16" viewBox="0 0 14 14"><path d="M1 7l6-6v3h6v6H7v3z" fill="#f4f4f4" stroke="#888"/></svg></button>
                <button aria-label="앞으로"><svg width="16" height="16" viewBox="0 0 14 14"><path d="M13 7L7 1v3H1v6h6v3z" fill="#f4f4f4" stroke="#888"/></svg></button>
                <button aria-label="모델에서"><svg width="20" height="20" viewBox="0 0 20 20"><path d="M3 9v10h14V9l-7-7z" fill="#fff" stroke="#000" stroke-width="1.500"/><path d="M0 11L10 1l10 10M4 5V1" fill="none" stroke="#000" stroke-width="2"/><path d="M7 11h6v8H7z"/></svg></button>
                <span class="combo"><select aria-label="재질 모음"><option>색상</option></select></span>
                <button aria-label="세부 정보"><svg width="16" height="18" viewBox="0 0 16 18"><path d="M6 0l10 9-10 9z"/><path d="M1 3h8v11H1z" fill="#fff" stroke="#456"/><path d="M1 3h8v4H1z" fill="#5a8fd0"/><path d="M2 10h6M2 12h6" stroke="#889"/></svg></button>
              </div>
              <div class="library">
                <div class="swatches">
                  <button class="c1" aria-label="색상 1"></button>
                  <button class="c2" aria-label="색상 2"></button>
                  <button class="c3" aria-label="색상 3"></button>
                  <button class="c4" aria-label="색상 4"></button>
                  <button class="c5" aria-label="색상 5"></button>
                  <button class="c6" aria-label="색상 6"></button>
                  <button class="c7" aria-label="색상 7"></button>
                  <button class="c8" aria-label="색상 8"></button>
                  <button class="c9" aria-label="색상 9"></button>
                </div>
                <div class="scroll"><svg viewBox="0 0 10 6"><path d="M0 6l5-5 5 5"/></svg><i></i><svg viewBox="0 0 10 6"><path d="M0 0l5 5 5-5"/></svg></div>
              </div>
            </div>

            <h3 class="head">구성 요소<button aria-label="닫기">×</button></h3>
            <h3 class="head">스타일<button aria-label="닫기">×</button></h3>
            <h3 class="head open">그림자<button aria-label="닫기">×</button></h3>
            <div class="shadow">
              <div class="row zone">
                <button aria-label="그림자 표시"><svg width="24" height="24" viewBox="0 0 24 24"><path d="M4 15l6 4 10-4 4 2-8 7H8z" fill="#222"/><path d="M1 6l13-5 8 12-12 7z" fill="#fff" stroke="#222"/><path d="M10 20l12-7v4l-11 7z" fill="#333"/></svg></button>
                <span class="combo"><select aria-label="시간대"><option>UTC+09:00</option></select></span>
                <button class="detail" aria-label="간단히"><svg viewBox="0 0 12 18"><path d="M.5.5h11v17H.5z" fill="#fff" stroke="#888"/><path d="M0 0h12v10H0z"/><path d="M2 16h8l-4-4z"/><path d="M3 5h6" stroke="#fff" stroke-width="2"/></svg></button>
              </div>
              <div class="row time">
                <label for="time">시간</label>
                <div class="slide"><input type="range" id="time" min="0" max="100" value="57"><div class="ticks"><span>07:07</span><span>정오</span><span>17:22</span></div></div>
                <span class="spin"><input type="text" value="01:30 오후" aria-label="시간 값"><span><button aria-label="위"></button><button aria-label="아래"></button></span></span>
              </div>
              <div class="row date">
                <label for="date">날짜</label>
                <div class="slide"><input type="range" id="date" min="0" max="100" value="86"><div class="ticks months"><span>J</span><span>F</span><span>M</span><span>A</span><span>M</span><span>J</span><span>J</span><span>A</span><span>S</span><span>O</span><span>N</span><span>D</span></div></div>
                <span class="combo"><select aria-label="날짜 값"><option>11/08</option></select></span>
              </div>
              <hr>
              <div class="row">
                <label for="light">밝음</label>
                <div class="slide"><input type="range" id="light" value="80"></div>
                <span class="spin"><input type="text" value="80" aria-label="밝음 값"><span><button aria-label="위"></button><button aria-label="아래"></button></span></span>
              </div>
              <div class="row">
                <label for="dark">어두움</label>
                <div class="slide"><input type="range" id="dark" value="44"></div>
                <span class="spin"><input type="text" value="45" aria-label="어두움 값"><span><button aria-label="위"></button><button aria-label="아래"></button></span></span>
              </div>
              <hr>
              <label class="sun"><input type="checkbox">음영 처리를 위해 태양 사용</label>
            </div>
          </div>
          <div class="scroll"><svg viewBox="0 0 10 6"><path d="M0 6l5-5 5 5"/></svg><i></i><svg viewBox="0 0 10 6"><path d="M0 0l5 5 5-5"/></svg></div>
        </div>
      </aside>
    </main>

    <footer class="status">
      <button aria-label="위치"><svg viewBox="0 0 18 18"><circle cx="9" cy="9" r="8" fill="none" stroke="#aaa" stroke-width="1.500"/><path d="M9 15L6 8q0-4 3-4t3 4z" fill="#999"/></svg></button>
      <button aria-label="정보"><svg viewBox="0 0 18 18"><circle cx="9" cy="9" r="8" fill="none" stroke="#000" stroke-width="2"/><circle cx="9" cy="5" r="2"/><path d="M7 8h4v6H7z"/></svg></button>
      <button aria-label="로그인"><svg viewBox="0 0 18 18"><circle cx="9" cy="9" r="8" fill="#ddd" stroke="#888" stroke-width="1.500"/><circle cx="9" cy="6" r="3" fill="#888"/><path d="M3 14q6-6 12 0-6 5-12 0z" fill="#888"/></svg></button>
      <p>가장자리에 있는 포인트를 선택합니다. Ctrl = 외접. Ctrl '+' 또는 Ctrl '-'를 사용해 조각 수를 변경합니다.</p>
      <label for="measure">내접 반경</label>
      <input type="text" id="measure" value="367mm">
    </footer>
  </div>
</body>
</html>
```

FILE: styles.css
```css
:root {
  --bg: #f1f0f1;
  --line: #9b9b9b;
  --active: #c2ddf6;
  --scene: #cececb;
}

* {
  box-sizing: border-box;
}

body {
  margin: 0;
  padding: 26px 0;
  height: 100vh;
  background: #000;
  color: #000;
  font-family: "Open Sans", "Noto Sans CJK KR", sans-serif;
  font-size: 12px;
}

h1, h2, h3, p {
  margin: 0;
  font-weight: 400;
}

button {
  padding: 0;
  border: none;
  background: none;
  color: inherit;
  font-family: inherit;
}

input, select {
  font-family: inherit;
  color: inherit;
}

svg {
  display: block;
}

.icon-defs {
  position: absolute;
  width: 0;
  height: 0;
}

.app {
  display: flex;
  flex-direction: column;
  height: 100%;
  background: var(--bg);
}

/* title and menu */
.titlebar {
  display: flex;
  align-items: center;
  height: 28px;
  padding: 0 3px 0 4px;
  gap: 7px;
  background: #fff;
}

.logo {
  width: 17px;
  height: 18px;
}

.titlebar h1 {
  flex: 1;
  font-size: 15px;
  line-height: 28px;
}

.window-buttons {
  display: flex;
}

.window-buttons button {
  display: grid;
  place-items: center;
  width: 58px;
  height: 28px;
}

.window-buttons svg {
  width: 12px;
  height: 12px;
  fill: none;
  stroke: #000;
  overflow: visible;
}

.menu {
  display: flex;
  gap: 14px;
  height: 26px;
  padding-left: 7px;
  background: #fff;
}

.menu a {
  color: #000;
  font-size: 16px;
  line-height: 26px;
  text-decoration: none;
}

/* toolbars */
.toolbars {
  display: flex;
  height: 46px;
  border-bottom: 1px solid var(--line);
}

.toolbar {
  display: flex;
  align-items: center;
  background: #f4f3f4;
  border-right: 1px solid #b4b4b4;
}

.grip {
  align-self: stretch;
  width: 10px;
  margin: 4px 0;
  background: radial-gradient(circle, #b0b0b0 1px, transparent 1px) 0 0 / 10px 4px;
}

.solids .grip {
  margin-right: 1px;
}

.dynamic .grip {
  margin-right: 3px;
}

.tool {
  display: grid;
  place-items: center;
  width: 42px;
  height: 40px;
}

.tool svg {
  width: 30px;
  height: 30px;
  overflow: visible;
}

.pink {
  fill: #802040;
  font-size: 8px;
}

.a1 {
  font-family: "Liberation Serif", serif;
  font-size: 13px;
}

.three {
  font-size: 11px;
}

.mark {
  font-size: 7px;
  text-anchor: middle;
}

.sep {
  width: 8px;
  height: 38px;
  border-left: 2px solid transparent;
  background: linear-gradient(#999, #999) 0 0 / 1px 100% no-repeat;
}

.split {
  display: flex;
  width: 64px;
  height: 40px;
  padding-left: 2px;
}

.drop {
  display: grid;
  place-items: center;
  width: 16px;
  margin-left: 1px;
}

.drop::after, .combo::after {
  content: "";
  border: 6px solid transparent;
  border-top: 6px solid #000;
  border-bottom: none;
}

.active {
  background: var(--active);
  outline: 1px solid #a0c8ec;
  outline-offset: -1px;
}

.active .drop {
  height: 14px;
  align-self: center;
  background: #f1f0f1;
}

.workspace {
  flex: 1;
  display: flex;
  min-height: 0;
}

.palette {
  width: 88px;
  padding-left: 2px;
  border-right: 1px solid #aaa;
}

.tools {
  display: grid;
  grid-template-columns: 42px 42px;
  padding-top: 10px;
  background: radial-gradient(circle, #b0b0b0 1px, transparent 1px) 0 3px / 4px 5px repeat-x, #f4f3f4;
  border-bottom: 1px solid #b4b4b4;
}

.tools .tool {
  margin: 1px 0;
}

.tools hr {
  grid-column: 1 / 3;
  width: 80px;
  height: 8px;
  margin: 0 2px;
  border: none;
  background: linear-gradient(#999, #999) 0 2px / 100% 1px no-repeat;
}

/* drawing area */
.canvas {
  position: relative;
  flex: 1;
  min-width: 0;
  background: var(--scene);
  border: 2px solid #757575;
  border-right: none;
  border-bottom: 1px solid #fff;
}

.scene {
  width: 100%;
  height: 100%;
}

.tooltip {
  position: absolute;
  left: 781px;
  top: 462px;
  padding: 0 4px 0 3px;
  border: 1px solid #555;
  background: #ffffe6;
  font-size: 15px;
  line-height: 17px;
}

.caption {
  position: absolute;
  left: -3px;
  bottom: 13px;
  width: 967px;
  max-width: 100%;
  padding: 0 0 8px 32px;
  background: rgba(0, 0, 0, 0.48);
  color: #f0f0f0;
  font-family: "Noto Sans CJK KR", sans-serif;
  font-size: 54px;
  font-weight: 400;
  line-height: 104px;
  white-space: nowrap;
}

.keys {
  position: absolute;
  right: 221px;
  bottom: -6px;
  z-index: 2;
  display: grid;
  justify-items: center;
  gap: 47px;
}

kbd {
  width: 164px;
  height: 57px;
  border: 5px solid #3c8de8;
  border-radius: 14px;
  box-shadow: inset 0 0 0 5px #3f6fa8;
  background: #8a8a8a;
  color: #fff;
  font-family: Inter, sans-serif;
  font-size: 31px;
  font-variant-ligatures: none;
  font-feature-settings: "calt" 0;
  font-weight: 900;
  line-height: 44px;
  text-align: center;
  white-space: nowrap;
}

kbd.older {
  opacity: 0.85;
}

kbd.faded {
  width: 160px;
  height: 53px;
  margin-bottom: 2px;
  background: #aaa;
  opacity: 0.1;
  filter: blur(1px);
}

/* tray */
.tray {
  display: flex;
  flex-direction: column;
  width: 303px;
  padding-left: 5px;
  border-left: 1px solid #fff;
}

.tray-title {
  display: flex;
  align-items: center;
  height: 26px;
  padding: 0 4px;
  background: linear-gradient(#c2d0e0, #d9e4f2);
}

.tray-title h2 {
  flex: 1;
  font-size: 15px;
}

.pin svg {
  width: 8px;
  height: 10px;
}

.tray-close {
  width: 12px;
  height: 12px;
  margin-left: 9px;
  background: #c15058;
  color: #fff;
  font-size: 11px;
  font-weight: 700;
  line-height: 9px;
}

.tray-body {
  flex: 1;
  display: flex;
  min-height: 0;
}

.panels {
  flex: 1;
  border-right: 1px solid #fff;
}

.head {
  position: relative;
  display: flex;
  align-items: center;
  height: 23px;
  margin-top: 1px;
  padding: 0 2px 0 9px;
  border: 1px solid #aaa;
  background: linear-gradient(#ececec, #b4b4b4);
  font-size: 16px;
  line-height: 20px;
}

.head::before {
  content: "";
  margin-right: 9px;
  border: 5px solid transparent;
  border-left: 8px solid #000;
  border-right: none;
}

.head.open::before {
  margin-right: 7px;
  border: 5px solid transparent;
  border-top: 8px solid #000;
  border-bottom: none;
}

.head button {
  width: 17px;
  height: 17px;
  margin-left: auto;
  border: 1px solid #999;
  background: #eee;
  font-size: 15px;
  line-height: 13px;
}

.detail svg {
  width: 12px;
  height: 18px;
}

.entity {
  display: flex;
  align-items: flex-start;
  justify-content: space-between;
  height: 181px;
  padding: 8px 8px 0 11px;
  background: linear-gradient(var(--line), var(--line)) 2px 32px / 246px 1px no-repeat;
}

.entity strong {
  font-weight: 500;
  line-height: 18px;
}

.material {
  display: flex;
  flex-direction: column;
  height: 339px;
  border-bottom: 2px solid #888;
}

.current {
  display: flex;
  align-items: flex-start;
  gap: 3px;
  height: 93px;
  padding: 2px 1px 0 2px;
  border-bottom: 1px solid var(--line);
}

.preview {
  width: 77px;
  height: 87px;
  border: 1px solid var(--line);
}

.current input {
  width: 162px;
  height: 24px;
  padding: 0 3px 4px;
  border: 2px solid #777;
  border-right: 1px solid #fff;
  border-bottom: 1px solid #fff;
  background: var(--bg);
  color: #777;
  font-size: 12px;
}

.side {
  flex: 1;
  display: grid;
  justify-items: center;
  row-gap: 9px;
  padding-top: 4px;
}

.side button + button + button {
  margin-top: -3px;
}

.tabs {
  display: flex;
  align-items: flex-end;
  height: 30px;
  padding-right: 4px;
}

.tabs button {
  width: 46px;
  height: 20px;
  border-top: 1px solid #fff;
  border-right: 2px solid #777;
  text-align: left;
  padding-left: 6px;
  font-size: 12px;
  line-height: 16px;
}

.tabs .on {
  width: 50px;
  height: 22px;
  padding-left: 7px;
}

.tabs .dropper {
  width: 22px;
  height: 26px;
  margin-left: auto;
  padding: 0;
  border: none;
}

.browse {
  display: flex;
  align-items: center;
  gap: 11px;
  height: 36px;
  padding: 0 6px 0 8px;
  border-bottom: 1px solid var(--line);
}

.browse .combo {
  flex: 1;
  height: 27px;
  margin: 3px -3px 0 -4px;
}

.combo {
  position: relative;
  display: block;
  border: 2px solid #777;
  border-right-color: #fff;
  border-bottom-color: #fff;
  background: #fff;
}

.combo select {
  appearance: none;
  width: 100%;
  height: 100%;
  padding: 0 22px 2px 3px;
  border: none;
  border-radius: 0;
  background: none;
  font-size: 12px;
}

.combo::before {
  content: "";
  position: absolute;
  top: 0;
  right: 0;
  bottom: 0;
  width: 21px;
  border: 1px solid #ddd;
  border-right: 2px solid #777;
  border-bottom: 2px solid #777;
  background: #f0f0f0;
  pointer-events: none;
}

.combo::after {
  position: absolute;
  top: calc(50% - 2px);
  right: 6px;
  border-width: 5px 5px 0;
  pointer-events: none;
}

.library {
  flex: 1;
  display: flex;
  min-height: 0;
  margin-bottom: 4px;
  background: #fff;
}

.swatches {
  flex: 1;
  display: grid;
  grid-template-columns: repeat(3, 62px);
  grid-auto-rows: 62px;
  gap: 2px;
  padding: 2px 3px 0;
  overflow: hidden;
}

.swatches button {
  border: 1px solid #99a;
  box-shadow: inset 0 0 0 1px #fff;
}

.c1 { background: #f9cdcd; }
.c2 { background: #f99b9b; }
.c3 { background: #f46767; }
.c4 { background: #ef3737; }
.c5 { background: #ec0303; }
.c6 { background: #cb0003; }
.c7 { background: #980003; }
.c8 { background: #650003; }
.c9 { background: #fcdacd; }

.scroll {
  display: flex;
  flex-direction: column;
  align-items: center;
  width: 20px;
  padding: 8px 0 7px;
  background: var(--bg);
}

.scroll svg {
  width: 10px;
  height: 6px;
  fill: none;
  stroke: #555;
  stroke-width: 2;
  overflow: visible;
}

.scroll i {
  width: 20px;
  height: 21px;
  margin: 7px 0 auto;
  background: #cdcdcd;
}

.tray-body > .scroll {
  padding-top: 10px;
}

/* shadow settings */
.shadow {
  padding: 3px 3px 0 4px;
}

.shadow hr {
  margin: 4px 0 5px;
  border: none;
  border-top: 1px solid var(--line);
}

.row {
  display: grid;
  grid-template-columns: 49px 123px 1fr;
  align-items: center;
  height: 36px;
}

.row > .combo, .row > .spin {
  width: 82px;
  height: 27px;
  margin-left: 15px;
}

.row > label {
  line-height: 16px;
  padding-bottom: 4px;
}

.time > label, .date > label {
  padding-bottom: 10px;
}

.zone {
  grid-template-columns: 49px 128px 1fr;
  height: 34px;
}

.zone > button:first-child {
  margin-left: 5px;
}

.zone > .combo {
  width: 128px;
  height: 24px;
  margin: 0 0 3px;
}

.zone > .detail {
  justify-self: end;
  margin-right: 5px;
}

.slide {
  align-self: start;
  padding-top: 12px;
}

.time .slide, .date .slide {
  padding-top: 5px;
}

input[type="range"] {
  appearance: none;
  display: block;
  width: 122px;
  height: 8px;
  margin: 0;
  border: 1px solid #888;
  border-right-color: #fff;
  border-bottom-color: #fff;
  background: linear-gradient(90deg, #000, #777 50%, #fff);
}

input[type="range"]::-webkit-slider-thumb {
  appearance: none;
  width: 4px;
  height: 13px;
  margin-top: 4px;
  border-right: 1px solid #777;
  border-bottom: 1px solid #777;
  background: #f4f4f4;
}

#time {
  background: linear-gradient(90deg, #fff, #a9cbe0 30%, #6f84e8 65%, #4a50b0 80%, #000);
}

#date {
  background: linear-gradient(90deg, #fff, #f0c030 30%, #e06020 55%, #e01818 68%, #f0a0a0 85%, #fff);
}

.ticks {
  display: flex;
  justify-content: space-between;
  width: 123px;
  font-family: "Liberation Sans", "Noto Sans CJK KR", sans-serif;
  font-size: 10px;
  font-weight: 700;
  line-height: 14px;
}

.months {
  padding: 0 3px;
}

.spin {
  display: flex;
  border: 2px solid #777;
  border-right-color: #fff;
  border-bottom-color: #fff;
  background: #fff;
}

.spin input {
  flex: 1;
  min-width: 0;
  padding: 0 0 3px 2px;
  border: none;
  background: none;
  font-size: 13px;
}

.spin > span {
  display: grid;
  grid-template-rows: 1fr 1fr;
  width: 20px;
}

.spin button {
  display: grid;
  place-items: center;
  border-right: 1px solid #777;
  border-bottom: 1px solid #777;
  background: #f0f0f0;
}

.spin button::after {
  content: "";
  border: 3px solid transparent;
  border-top: none;
  border-bottom: 3px solid #000;
}

.spin button + button::after {
  border-top: 3px solid #000;
  border-bottom: none;
}

.row .combo select, .zone select {
  font-size: 13px;
}

.sun {
  display: flex;
  align-items: center;
  gap: 7px;
  padding: 6px 0 0 70px;
  line-height: 16px;
}

.sun input {
  appearance: none;
  width: 15px;
  height: 15px;
  margin: 0;
  border: 2px solid #777;
  border-right: 1px solid #ddd;
  border-bottom: 1px solid #ddd;
  background: #fff;
}

/* status bar */
.status {
  display: flex;
  align-items: center;
  height: 31px;
  padding: 3px 5px 0 6px;
  background: #f2f1f3;
  font-size: 17px;
}

.status button {
  width: 18px;
  margin-right: 17px;
}

.status svg {
  width: 18px;
  height: 18px;
}

.status p {
  flex: 1;
  margin-left: -5px;
  padding-left: 12px;
  border-left: 1px solid #999;
  line-height: 18px;
}

.status label {
  padding: 0 10px;
  border-left: 1px solid #999;
  line-height: 18px;
}

.status input {
  width: 250px;
  height: 28px;
  padding: 0 3px;
  border: 1px solid #abb6c6;
  border-bottom: none;
  background: #fff;
  font-size: 16px;
}
```
